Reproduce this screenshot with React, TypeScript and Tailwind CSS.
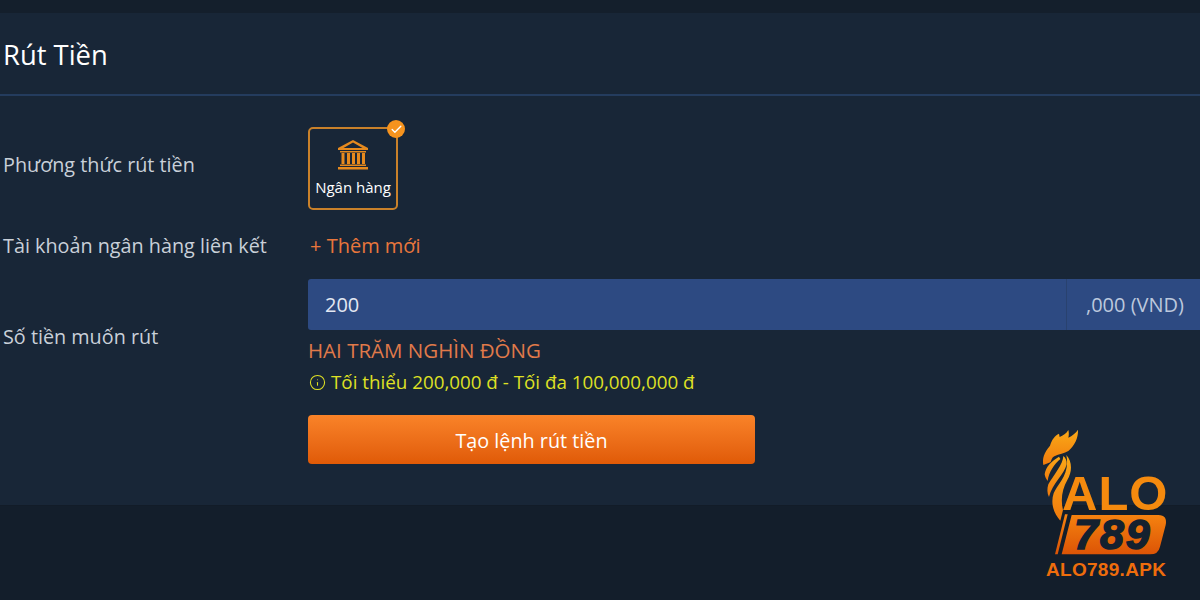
import { Check, Info } from 'lucide-react';

const FONT = { fontFamily: '"Open Sans", "Noto Sans", sans-serif' };

function BankIcon() {
  return (
    <svg width="32" height="32" viewBox="0 0 32 32" fill="#e68a1e">
      <path d="M16 1 L31 9 V11 H1 V9 Z M16 3.6 L6.5 9 H25.500 Z" fillRule="evenodd" />
      <rect x="3" y="12" width="26" height="1.500" />
      <rect x="4.500" y="14" width="3" height="11" />
      <rect x="10" y="14" width="3" height="11" />
      <rect x="15" y="14" width="3" height="11" />
      <rect x="20" y="14" width="3" height="11" />
      <rect x="25" y="14" width="3" height="11" />
      <rect x="3" y="25.500" width="26" height="1.500" />
      <rect x="1" y="28" width="30" height="2.500" />
    </svg>
  );
}

function Logo() {
  return (
    <div className="absolute left-[1035px] top-[425px] w-[140px] h-[170px]">
      {/* rooster head and feathers */}
      <svg className="absolute left-0 top-0" width="70" height="100" viewBox="0 0 210 300">
        <defs>
          <linearGradient id="flame" x1="0" y1="0" x2="0" y2="1">
            <stop offset="0" stopColor="#fbaa18" />
            <stop offset="1" stopColor="#f07a0c" />
          </linearGradient>
        </defs>
        <path
          fill="url(#flame)"
          d="M25 120 C22 100 26 85 45 62 C50 45 60 30 72 26 L74 36 C84 32 94 26 100 15 C102 24 102 30 100 38 C112 32 122 24 129 14 C130 40 118 62 100 78 C88 86 72 86 58 94 C48 100 50 108 46 112 Z"
        />
        <path fill="url(#flame)" d="M72 95 C50 108 32 125 29 148 C30 155 33 162 38 168 C42 140 58 118 76 102 Z" />
        <path fill="url(#flame)" d="M85 93 C84 118 56 150 40 178 C36 190 36 205 42 216 C52 175 88 148 95 118 C96 108 92 98 85 93 Z" />
        <path fill="url(#flame)" d="M94 90 C112 110 112 140 97 165 C82 190 76 225 84 255 L76 287 C56 265 46 235 56 205 C66 178 106 150 94 90 Z" />
      </svg>
      <span className="absolute left-[27px] top-[48px] font-['Liberation_Sans',sans-serif] font-bold text-[49px] leading-[40px] tracking-[1px] text-[#f58a0e]">
        ALO
      </span>
      {/* 789 plate */}
      <svg className="absolute left-[10px] top-[80px]" width="130" height="55" viewBox="0 0 390 165">
        <defs>
          <linearGradient id="plate" x1="0" y1="0" x2="0" y2="1">
            <stop offset="0" stopColor="#f5820f" />
            <stop offset="1" stopColor="#dc5406" />
          </linearGradient>
        </defs>
        <path fill="url(#plate)" d="M60 28 H68 L38 148 H30 Z" />
        <path fill="url(#plate)" d="M80 30 H340 Q368 30 362 60 L345 125 Q340 148 315 148 H50 Z" />
      </svg>
      <span className="absolute left-[39px] top-[88px] font-['Liberation_Sans',sans-serif] font-bold italic text-[43px] leading-[43px] tracking-[2px] text-[#14212f] [-webkit-text-stroke:1.5px_#14212f]">
        789
      </span>
      <span className="absolute left-[11px] top-[135px] font-['Liberation_Sans',sans-serif] font-bold text-[19px] leading-[19px] tracking-[0.3px] text-[#ee6d0c]">
        ALO789.APK
      </span>
    </div>
  );
}

export default function App() {
  return (
    <div style={FONT} className="relative w-[1200px] h-[600px] overflow-hidden bg-[#131e2b] text-[#c9d0d9]">
      <div className="h-[13px] bg-[#141f2c]" />
      <div className="h-[493px] bg-[#182637] pl-[3px] border-b border-[#121c28]">
        <h1 className="h-[83px] pt-[24px] text-[27.400px] leading-[36px] text-white border-b-2 border-[#243c5e] -ml-[3px] pl-[3px]">
          Rút Tiền
        </h1>

        <div className="flex mt-[30px] h-[84px]">
          <div className="w-[305px] pt-[25px] text-[19.800px] leading-[28px]">Phương thức rút tiền</div>
          <div className="relative mt-[1px] w-[90px] h-[83px] rounded-[5px] border-2 border-[#c9812a] flex flex-col items-center pt-[10px]">
            <BankIcon />
            <span className="mt-[6px] text-[15px] leading-[20px] font-medium text-white">Ngân hàng</span>
            <span className="absolute -right-[9px] -top-[9px] w-[18px] h-[18px] rounded-full bg-[#f6931e] flex items-center justify-center">
              <Check size={13} strokeWidth={2.5} className="text-white" />
            </span>
          </div>
        </div>

        <div className="flex mt-[21px] h-[28px] pt-[1px] text-[19.800px] leading-[28px]">
          <div className="w-[305px]">Tài khoản ngân hàng liên kết</div>
          <div className="pl-[2px] text-[20px] text-[#e8763c]">+ Thêm mới</div>
        </div>

        <div className="flex mt-[20px]">
          <div className="w-[305px] pt-[44px] text-[19.800px] leading-[28px]">Số tiền muốn rút</div>
          <div className="flex-1 min-w-0">
            <div className="flex h-[51px] bg-[#2d4a82] rounded-l-[3px] text-[20px] items-center">
              <div className="flex-1 pl-[17px] pt-[1px] text-[#e3e8f2]">200</div>
              <div className="w-[134px] h-full flex items-center pl-[19px] pt-[1px] border-l border-[#29426f] text-[#bcc8dd] whitespace-nowrap">
                ,000 (VND)
              </div>
            </div>
            <div className="mt-[6px] text-[20.500px] leading-[28px] text-[#e07a4a]">HAI TRĂM NGHÌN ĐỒNG</div>
            <div className="mt-[5px] flex items-center gap-[5px] pl-[1px] text-[18.800px] leading-[26px] text-[#dfe024]">
              <Info size={17} strokeWidth={1.5} />
              <span>Tối thiểu 200,000 đ - Tối đa 100,000,000 đ</span>
            </div>
            <button className="mt-[20px] w-[447px] h-[49px] pt-[2px] rounded-[4px] bg-gradient-to-b from-[#f98328] to-[#e05a06] text-[19.800px] text-white">
              Tạo lệnh rút tiền
            </button>
          </div>
        </div>
      </div>
      <Logo />
    </div>
  );
}
